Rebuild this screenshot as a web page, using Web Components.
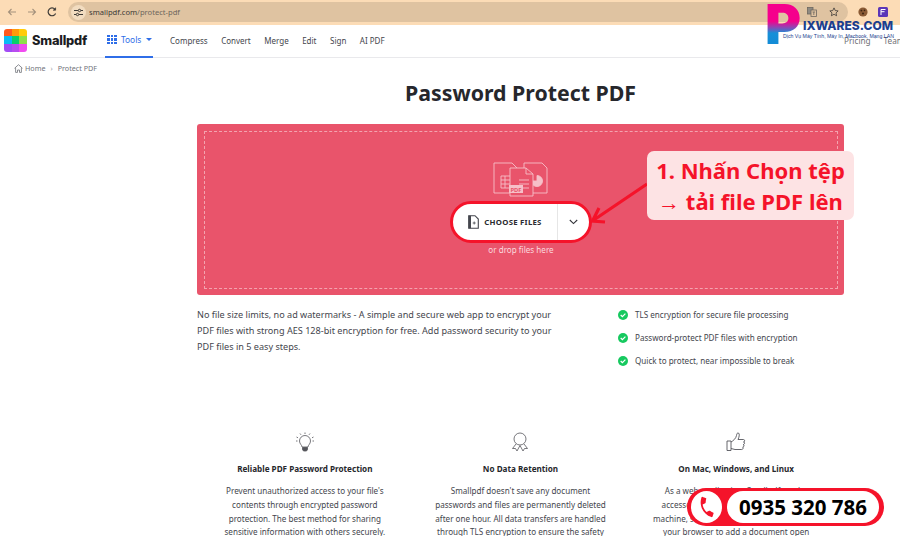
<!DOCTYPE html>
<html lang="en">
<head>
<meta charset="utf-8">
<title>Protect PDF</title>
<style>
    html, body { margin: 0; height: 536px; overflow: hidden; background: #fff; }
    body { font-family: "Noto Sans", sans-serif; color: #44464d; position: relative; }
    .main { margin-left: 197px; width: 647px; }
</style>
</head>
<body>
<browser-bar url="smallpdf.com" path="/protect-pdf"></browser-bar>
<site-nav></site-nav>
<crumb-bar></crumb-bar>
<div class="main">
    <page-title>Password Protect PDF</page-title>
    <drop-zone></drop-zone>
    <info-row></info-row>
    <feature-list></feature-list>
</div>
<promo-callout></promo-callout>
<brand-mark></brand-mark>
<phone-badge number="0935 320 786"></phone-badge>

<script>
class BrowserBar extends HTMLElement {
    constructor() {
        super();
        this.attachShadow({ mode: 'open' });
    }

    connectedCallback() {
        const url = this.getAttribute('url');
        const path = this.getAttribute('path');
        this.shadowRoot.innerHTML = `
        <style>
            :host {
                display: flex;
                align-items: center;
                height: 25px;
                box-sizing: border-box;
                padding: 0 0 1px 6px;
                background: #fcdcb6;
                font-family: "Noto Sans", sans-serif;
            }
            svg { display: block; flex: none; }
            .btns { display: flex; gap: 8px; width: 62px; align-items: center; }
            .pill {
                display: flex;
                align-items: center;
                width: 780px;
                height: 20px;
                box-sizing: border-box;
                border-radius: 10px;
                background: #dfc3a1;
                padding: 0 9px 0 3px;
                gap: 12px;
            }
            .tune {
                width: 15px;
                height: 15px;
                border-radius: 50%;
                background: #f2dcc0;
                display: flex;
                align-items: center;
                justify-content: center;
                margin-right: -9px;
            }
            .url { font-size: 7.6px; color: #3c3a36; white-space: nowrap; flex: 1; }
            .url span { color: #6e665c; }
            .ext { display: flex; align-items: center; gap: 10px; margin-left: 10px; }
        </style>
        <div class="btns">
            <svg width="12" height="12" viewBox="0 0 12 12" fill="none" stroke="#a3917c" stroke-width="1.1"><path d="M10 6H2.5M5.5 3 2.5 6l3 3"/></svg>
            <svg width="12" height="12" viewBox="0 0 12 12" fill="none" stroke="#a3917c" stroke-width="1.1"><path d="M2 6h7.5M6.5 3l3 3-3 3"/></svg>
            <svg width="12" height="12" viewBox="0 0 12 12" fill="none" stroke="#3d3a36" stroke-width="1.2"><path d="M9.6 7.4A3.9 3.9 0 1 1 9 3.3"/><path d="M9.6 1.6v2.6H7" fill="#3d3a36" stroke-width=".7"/></svg>
        </div>
        <div class="pill">
            <div class="tune">
                <svg width="9" height="9" viewBox="0 0 9 9" fill="none" stroke="#3d3a36" stroke-width="1"><path d="M0 2.5h4M7 2.5h2M0 6.5h2M5 6.5h4"/><circle cx="5.5" cy="2.5" r="1.2"/><circle cx="3.5" cy="6.5" r="1.2"/></svg>
            </div>
            <div class="url">${url}<span>${path}</span></div>
            <svg width="10" height="10" viewBox="0 0 10 10" fill="none" stroke="#6d675f" stroke-width=".8"><rect x=".5" y=".5" width="5.500" height="6.500" fill="#8f8a82"/><rect x="4" y="3" width="5.500" height="6.500" fill="#dfc3a1"/><path d="M5.500 5h2.600M6.800 5v3"/></svg>
            <svg width="10" height="10" viewBox="0 0 10 10" fill="none" stroke="#3d3a36" stroke-width=".8"><path d="m5 .9 1.250 2.650 2.900.35-2.150 2 .6 2.850L5 7.300 2.400 8.750l.6-2.850-2.150-2 2.900-.35z"/></svg>
        </div>
        <div class="ext">
            <svg width="10" height="10" viewBox="0 0 10 10"><circle cx="5" cy="5" r="4.600" fill="#8a5a34"/><circle cx="3.400" cy="3.600" r=".9" fill="#3b2412"/><circle cx="6.500" cy="3.400" r=".8" fill="#3b2412"/><circle cx="5" cy="6.500" r="1" fill="#3b2412"/></svg>
            <svg width="10" height="10" viewBox="0 0 10 10"><rect width="10" height="10" rx="1.500" fill="#5b36b8"/><path d="M3 2.500h4.500M3 4.700h3.500M3 2.500V8" stroke="#fff" stroke-width="1" fill="none"/></svg>
        </div>
        `;
    }
}

class SiteNav extends HTMLElement {
    constructor() {
        super();
        this.attachShadow({ mode: 'open' });
    }

    connectedCallback() {
        const cols = ['#ff5a1f', '#ff9a0a', '#ffcb0a', '#0abcf5', '#0ad06a', '#8ee04a', '#a24bf5', '#b84cf0', '#f04cf0'];
        const cells = cols.map(c => `<i style="background:${c}"></i>`).join('');
        const dots = Array(9).fill('<i></i>').join('');
        const links = ['Compress', 'Convert', 'Merge', 'Edit', 'Sign', 'AI PDF'];
        this.shadowRoot.innerHTML = `
        <style>
            :host {
                display: flex;
                align-items: center;
                height: 33px;
                box-sizing: border-box;
                padding: 0 0 2px 4px;
                border-bottom: 1px solid #e9e9ec;
                font-family: "Noto Sans", sans-serif;
                font-size: 8px;
                color: #44464d;
            }
            .logo {
                display: grid;
                grid-template-columns: repeat(3, 1fr);
                width: 23px;
                height: 23px;
                border-radius: 3px;
                overflow: hidden;
                flex: none;
            }
            .logo i { display: block; }
            .name {
                font-family: Inter, sans-serif;
                font-weight: 800;
                font-size: 12.800px;
                color: #1c1c22;
                margin-left: 5px;
                width: 73px;
                letter-spacing: -.2px;
            }
            .tools {
                display: flex;
                align-items: center;
                align-self: stretch;
                width: 48px;
                box-sizing: border-box;
                padding: 0 0 2px 2px;
                gap: 4px;
                font-size: 8.400px;
                color: #2f6ee8;
                border-bottom: 2px solid #2f6ee8;
                margin-bottom: -3px;
            }
            .dots { display: grid; grid-template-columns: repeat(3, 2.6px); gap: 1.1px; }
            .dots i { display: block; height: 2.6px; background: #2f6ee8; }
            .caret { width: 0; height: 0; border: 3px solid transparent; border-top: 3.2px solid #2f6ee8; border-bottom: 0; margin-left: 1px; }
            ul { display: flex; gap: 13.500px; list-style: none; margin: 0 0 0 17px; padding: 0; flex: 1; }
        </style>
        <div class="logo">${cells}</div>
        <div class="name">Smallpdf</div>
        <div class="tools"><div class="dots">${dots}</div>Tools<span class="caret"></span></div>
        <ul>${links.map(l => `<li>${l}</li>`).join('')}</ul>
        `;
    }
}

class CrumbBar extends HTMLElement {
    constructor() {
        super();
        this.attachShadow({ mode: 'open' });
    }

    connectedCallback() {
        this.shadowRoot.innerHTML = `
        <style>
            :host {
                display: flex;
                align-items: center;
                height: 20px;
                padding-left: 14px;
                gap: 2px;
                font-family: "Noto Sans", sans-serif;
                font-size: 7.200px;
                color: #71737a;
            }
            svg { display: block; }
            .sep { margin: 0 3px; font-size: 7px; color: #a0a2a8; }
        </style>
        <svg width="9" height="9" viewBox="0 0 9 9" fill="none" stroke="#71737a" stroke-width=".8"><path d="M.5 4.3 4.5.7l4 3.6M1.6 3.6V8.4h1.900V6h2v2.400h1.900V3.600"/></svg>
        <span>Home</span><span class="sep">›</span><span>Protect PDF</span>
        `;
    }
}

class PageTitle extends HTMLElement {
    constructor() {
        super();
        const root = this.attachShadow({ mode: 'open' });
        root.innerHTML = `
        <style>
            :host {
                display: block;
                text-align: center;
                font-family: "Noto Sans", sans-serif;
                font-size: 21.300px;
                font-weight: 700;
                line-height: 30px;
                color: #26272c;
                margin-bottom: 16px;
            }
        </style>
        <slot></slot>
        `;
    }
}

class DropZone extends HTMLElement {
    constructor() {
        super();
        this.attachShadow({ mode: 'open' });
    }

    connectedCallback() {
        this.shadowRoot.innerHTML = `
        <style>
            :host {
                display: block;
                height: 171px;
                box-sizing: border-box;
                padding: 7px 6px 6px 7px;
                background: #e9546b;
                border-radius: 3px;
                font-family: "Noto Sans", sans-serif;
            }
            .inner {
                height: 100%;
                box-sizing: border-box;
                border: 1px dashed #f3a3af;
                display: flex;
                flex-direction: column;
                align-items: center;
                padding-top: 30px;
            }
            svg { display: block; }
            .btn {
                display: flex;
                align-items: center;
                width: 142px;
                height: 42px;
                margin-top: 4px;
                box-sizing: border-box;
                border: 3.500px solid #f5132a;
                border-radius: 21px;
                background: #fff;
                color: #2a2b30;
            }
            .main {
                display: flex;
                align-items: center;
                justify-content: center;
                gap: 5px;
                flex: 1;
                height: 100%;
                font-size: 7.800px;
                font-weight: 700;
                letter-spacing: .25px;
                border-right: 1px solid #e6e6e6;
            }
            .more { width: 31px; display: flex; justify-content: center; }
            .hint { margin-top: 1px; font-size: 8.100px; color: #fbd9de; }
        </style>
        <div class="inner">
            <svg width="56" height="35" viewBox="0 0 56 35" fill="none" stroke="#f6c0c8" stroke-width=".9">
                <path d="M1 1h18l5 5v25H1z" fill="#e9546b"/>
                <path d="M8 14h9M8 18h9M8 22h9M8 26h9M8 14v12M12 14v12"/>
                <path d="M31 1h18l5 5v25H31z" fill="#e9546b"/>
                <path d="M44 13.500a5.500 5.500 0 1 1-5.500 5.500h5.500z" fill="#f6c0c8"/>
                <path d="M17 6h16l7 6v22H17z" fill="#e9546b"/>
                <path d="M33 6v6h7M26 18h10M26 22h10M29 26h7"/>
                <rect x="16" y="23" width="14" height="8" fill="#f6c0c8" stroke="none"/>
                <text x="17.500" y="29.500" font-size="5.800" font-weight="700" font-family="Noto Sans" fill="#e9546b" stroke="none">PDF</text>
            </svg>
            <div class="btn">
                <div class="main">
                    <svg width="11" height="14" viewBox="0 0 11 14"><path d="M.7.7h6.300l3.300 3.300v9.300H.7z" fill="#fff" stroke="#44464d" stroke-width="1.100"/><path d="M.7.7h2.300v12.600H.7z" fill="#44464d"/><path d="M6.200 6.500v3M4.700 8h3" stroke="#44464d" stroke-width=".8"/></svg>
                    CHOOSE FILES
                </div>
                <div class="more">
                    <svg width="9" height="6" viewBox="0 0 9 6" fill="none" stroke="#33343a" stroke-width="1.100"><path d="m.8 1 3.700 3.600L8.200 1"/></svg>
                </div>
            </div>
            <div class="hint">or drop files here</div>
        </div>
        `;
    }
}

class InfoRow extends HTMLElement {
    constructor() {
        super();
        this.attachShadow({ mode: 'open' });
    }

    connectedCallback() {
        const checks = [
            'TLS encryption for secure file processing',
            'Password-protect PDF files with encryption',
            'Quick to protect, near impossible to break'
        ];
        this.shadowRoot.innerHTML = `
        <style>
            :host {
                display: flex;
                justify-content: space-between;
                align-items: flex-start;
                padding-top: 12px;
                font-family: "Noto Sans", sans-serif;
                color: #44464d;
            }
            p { margin: 0; width: 360px; font-size: 9.100px; line-height: 16px; }
            ul { list-style: none; margin: -4px 0 0; padding: 0; width: 226px; font-size: 8.100px; }
            li { display: flex; align-items: center; gap: 7px; height: 23px; }
            svg { display: block; flex: none; }
        </style>
        <p>No file size limits, no ad watermarks - A simple and secure web app to encrypt your PDF files with strong AES 128-bit encryption for free. Add password security to your PDF files in 5 easy steps.</p>
        <ul>
            ${checks.map(c => `<li><svg width="10" height="10" viewBox="0 0 10 10"><circle cx="5" cy="5" r="5" fill="#16c95f"/><path d="m2.700 5 1.700 1.700 3-3" fill="none" stroke="#fff" stroke-width="1.200"/></svg>${c}</li>`).join('')}
        </ul>
        `;
    }
}

const ICONS = {
    bulb: `<svg width="20" height="20" viewBox="0 0 20 20" fill="none" stroke="#55565c" stroke-width=".8"><path d="M7 15c0-2-2.500-3-2.500-6a5.500 5.500 0 0 1 11 0c0 3-2.500 4-2.500 6z"/><path d="M7.500 15.500h5v2l-1 1.500h-3l-1-1.500z" fill="#55565c"/><path d="M10 .5v1.500M5 1.500l1 1.300M15 1.500l-1 1.300M1.500 5l1.500.8M18.500 5 17 5.800M1 9h1.500M19 9h-1.500"/></svg>`,
    ribbon: `<svg width="20" height="20" viewBox="0 0 20 20" fill="none" stroke="#55565c" stroke-width=".8"><circle cx="10" cy="7" r="6"/><path d="m6 12-3.500 4.500 3 0 1.500 2.500 3-5.500 3 5.500 1.500-2.500 3 0L14 12"/></svg>`,
    thumb: `<svg width="20" height="20" viewBox="0 0 20 20" fill="none" stroke="#55565c" stroke-width=".9"><path d="M1 9h4v9.500H1z"/><path d="M5 10c2-1 5-3.500 5.500-6.500.3-2 1-3 2-2.500 1.500 1 .5 4.500-.5 6.500h5.500c1.500 0 1.500 2.500 0 2.500 1.500 0 1.500 2.500-.3 2.500 1.300.3 1 2.500-.5 2.500.8.500.5 2.500-1 2.500H9c-1.500 0-2.500-1-4-1"/></svg>`
};

class FeatureCard extends HTMLElement {
    constructor() {
        super();
        this.attachShadow({ mode: 'open' });
    }

    connectedCallback() {
        const icon = ICONS[this.getAttribute('icon')];
        const title = this.getAttribute('heading');
        this.shadowRoot.innerHTML = `
        <style>
            :host {
                display: flex;
                flex-direction: column;
                align-items: center;
                text-align: center;
                font-family: "Noto Sans", sans-serif;
                color: #44464d;
            }
            svg { display: block; height: 20px; }
            h4 { margin: 10px 0 8px; font-size: 8.150px; line-height: 14px; font-weight: 700; color: #26272c; white-space: nowrap; }
            div.body { font-size: 8.100px; line-height: 13.800px; white-space: nowrap; }
        </style>
        ${icon}
        <h4>${title}</h4>
        <div class="body"><slot></slot></div>
        `;
    }
}

class FeatureList extends HTMLElement {
    constructor() {
        super();
        this.attachShadow({ mode: 'open' });
    }

    connectedCallback() {
        this.shadowRoot.innerHTML = `
        <style>
            :host {
                display: grid;
                grid-template-columns: repeat(3, 1fr);
                padding-top: 60px;
            }
        </style>
        <feature-card icon="bulb" heading="Reliable PDF Password Protection">Prevent unauthorized access to your file's<br>contents through encrypted password<br>protection. The best method for sharing<br>sensitive information with others securely.</feature-card>
        <feature-card icon="ribbon" heading="No Data Retention">Smallpdf doesn't save any document<br>passwords and files are permanently deleted<br>after one hour. All data transfers are handled<br>through TLS encryption to ensure the safety</feature-card>
        <feature-card icon="thumb" heading="On Mac, Windows, and Linux">As a web application, Smallpdf can be<br>accessed from any operating system or<br>machine, so all you need to do is simply use<br>your browser to add a document open</feature-card>
        `;
    }
}

class PromoCallout extends HTMLElement {
    constructor() {
        super();
        this.attachShadow({ mode: 'open' });
    }

    connectedCallback() {
        this.shadowRoot.innerHTML = `
        <style>
            :host {
                position: absolute;
                left: 590px;
                top: 151px;
                width: 264px;
                height: 90px;
                font-family: "Noto Sans", sans-serif;
            }
            .box {
                position: absolute;
                left: 57px;
                top: 0;
                width: 207px;
                height: 69px;
                box-sizing: border-box;
                border-radius: 7px;
                background: #fde3e4;
                color: #f5132a;
                font-weight: 700;
                font-size: 22px;
                line-height: 31px;
                text-align: center;
                padding-top: 4px;
                white-space: nowrap;
            }
            svg { position: absolute; left: 0; top: 0; }
        </style>
        <svg width="60" height="90" viewBox="0 0 60 90" fill="none" stroke="#f5132a" stroke-width="3.200"><path d="M57 33 3 69.500M9 57 2.500 70 15 71"/></svg>
        <div class="box">1. Nhấn Chọn tệp<br>→ tải file PDF lên</div>
        `;
    }
}

class BrandMark extends HTMLElement {
    constructor() {
        super();
        this.attachShadow({ mode: 'open' });
    }

    connectedCallback() {
        this.shadowRoot.innerHTML = `
        <style>
            :host {
                position: absolute;
                left: 769px;
                top: 2px;
                width: 131px;
                height: 44px;
                font-family: Inter, sans-serif;
            }
            .p {
                position: absolute;
                left: -4px;
                top: -13px;
                font-size: 55px;
                line-height: 70px;
                font-weight: 900;
                background: linear-gradient(180deg, #f5008c 0 46%, #9a3fb0 54%, #1690d8 63%, #0f84d4 100%);
                -webkit-background-clip: text;
                background-clip: text;
                color: transparent;
            }
            .word {
                position: absolute;
                left: 34px;
                top: 16px;
                font-size: 12px;
                line-height: 16px;
                font-weight: 800;
                color: #1c3f8f;
                white-space: nowrap;
            }
            .sub {
                position: absolute;
                left: 14px;
                top: 31px;
                font-family: "Liberation Sans", sans-serif;
                font-size: 5.200px;
                line-height: 7px;
                color: #1c3f8f;
                white-space: nowrap;
            }
            .under {
                position: absolute;
                left: 75px;
                top: 33px;
                display: flex;
                gap: 13px;
                font-family: "Noto Sans", sans-serif;
                font-size: 8.200px;
                color: #6f7075;
                white-space: nowrap;
            }
        </style>
        <div class="under"><span>Pricing</span><span>Team</span></div>
        <div class="p">P</div>
        <div class="word">IXWARES.COM</div>
        <div class="sub">Dịch Vụ Máy Tính, Máy In, Macbook, Mạng LAN</div>
        `;
    }
}

class PhoneBadge extends HTMLElement {
    constructor() {
        super();
        this.attachShadow({ mode: 'open' });
    }

    connectedCallback() {
        const number = this.getAttribute('number');
        this.shadowRoot.innerHTML = `
        <style>
            :host {
                position: absolute;
                left: 687px;
                top: 488px;
                width: 197px;
                height: 38px;
                box-sizing: border-box;
                display: flex;
                align-items: center;
                gap: 5px;
                padding: 3px 5px 3px 4px;
                border-radius: 19px;
                background: #f5132a;
                font-family: "Noto Sans", sans-serif;
            }
            .icon {
                width: 31px;
                height: 32px;
                border-radius: 50%;
                background: #fff;
                display: flex;
                align-items: center;
                justify-content: center;
                flex: none;
            }
            .num {
                flex: 1;
                height: 32px;
                border-radius: 16px;
                background: #fff;
                color: #000;
                font-size: 20.500px;
                font-weight: 700;
                line-height: 32px;
                text-align: center;
                white-space: nowrap;
            }
            svg { display: block; transform: rotate(18deg); }
        </style>
        <div class="icon">
            <svg width="22" height="22" viewBox="0 0 24 24"><path d="M6.600 10.800c1.400 2.800 3.800 5.100 6.600 6.600l2.200-2.200c.3-.3.7-.4 1-.2 1.100.4 2.300.6 3.600.6.600 0 1 .4 1 1V20c0 .6-.4 1-1 1C10.600 21 3 13.400 3 4c0-.6.4-1 1-1h3.500c.6 0 1 .4 1 1 0 1.300.2 2.500.6 3.600.1.300 0 .7-.2 1z" fill="#f5132a"/></svg>
        </div>
        <div class="num">${number}</div>
        `;
    }
}

customElements.define('browser-bar', BrowserBar);
customElements.define('site-nav', SiteNav);
customElements.define('crumb-bar', CrumbBar);
customElements.define('page-title', PageTitle);
customElements.define('drop-zone', DropZone);
customElements.define('info-row', InfoRow);
customElements.define('feature-card', FeatureCard);
customElements.define('feature-list', FeatureList);
customElements.define('promo-callout', PromoCallout);
customElements.define('brand-mark', BrandMark);
customElements.define('phone-badge', PhoneBadge);
</script>
</body>
</html>
